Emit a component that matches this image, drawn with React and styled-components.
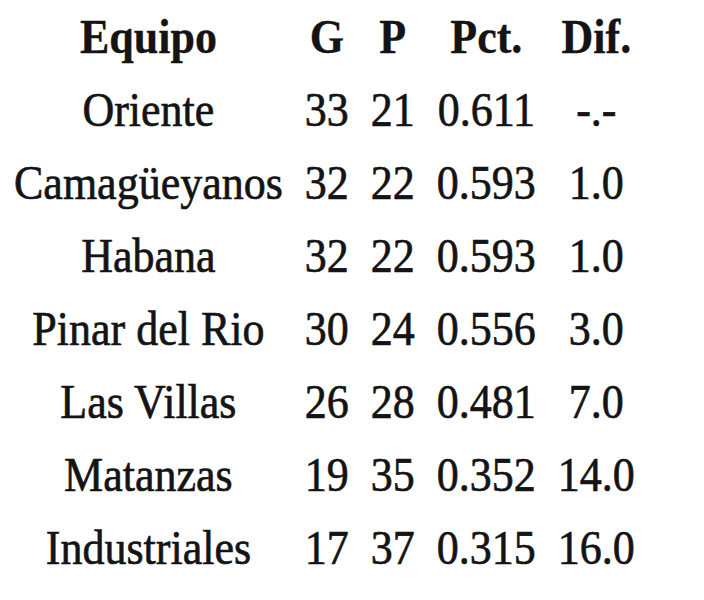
import React from "react";
import styled, { createGlobalStyle } from "styled-components";

const Global = createGlobalStyle`
  html, body { margin: 0; padding: 0; background: #fff; }
  body { font-family: "Liberation Serif", "Times New Roman", serif; color: #141414; }
`;

const Wrap = styled.div`
  padding: 0 0 0 3px;
`;

const Table = styled.table`
  border-collapse: collapse;
  border-spacing: 0;
  font-size: 44px;
`;

const Cell = styled.td`
  padding: 0 11px;
  height: 73px;
  line-height: 73px;
  text-align: center;
  white-space: nowrap;
  font-weight: ${(p) => (p.$head ? 700 : 400)};
`;

const HeadCell = styled(Cell).attrs({ as: "th" })``;

const Glyphs = styled.span`
  display: inline-block;
  transform: scaleY(1.12);
  -webkit-text-stroke: ${(p) => (p.$head ? "0.3px" : "0.6px")} #141414;
`;

const rows = [
  ["Oriente", "33", "21", "0.611", "-.-"],
  ["Camagüeyanos", "32", "22", "0.593", "1.0"],
  ["Habana", "32", "22", "0.593", "1.0"],
  ["Pinar del Rio", "30", "24", "0.556", "3.0"],
  ["Las Villas", "26", "28", "0.481", "7.0"],
  ["Matanzas", "19", "35", "0.352", "14.0"],
  ["Industriales", "17", "37", "0.315", "16.0"],
];

export default function App() {
  return (
    <Wrap>
      <Global />
      <Table>
        <thead>
          <tr>
            {["Equipo", "G", "P", "Pct.", "Dif."].map((h) => (
              <HeadCell key={h} $head>
                <Glyphs $head>{h}</Glyphs>
              </HeadCell>
            ))}
          </tr>
        </thead>
        <tbody>
          {rows.map((r) => (
            <tr key={r[0]}>
              {r.map((c, i) => (
                <Cell key={i}>
                  <Glyphs>{c}</Glyphs>
                </Cell>
              ))}
            </tr>
          ))}
        </tbody>
      </Table>
    </Wrap>
  );
}
